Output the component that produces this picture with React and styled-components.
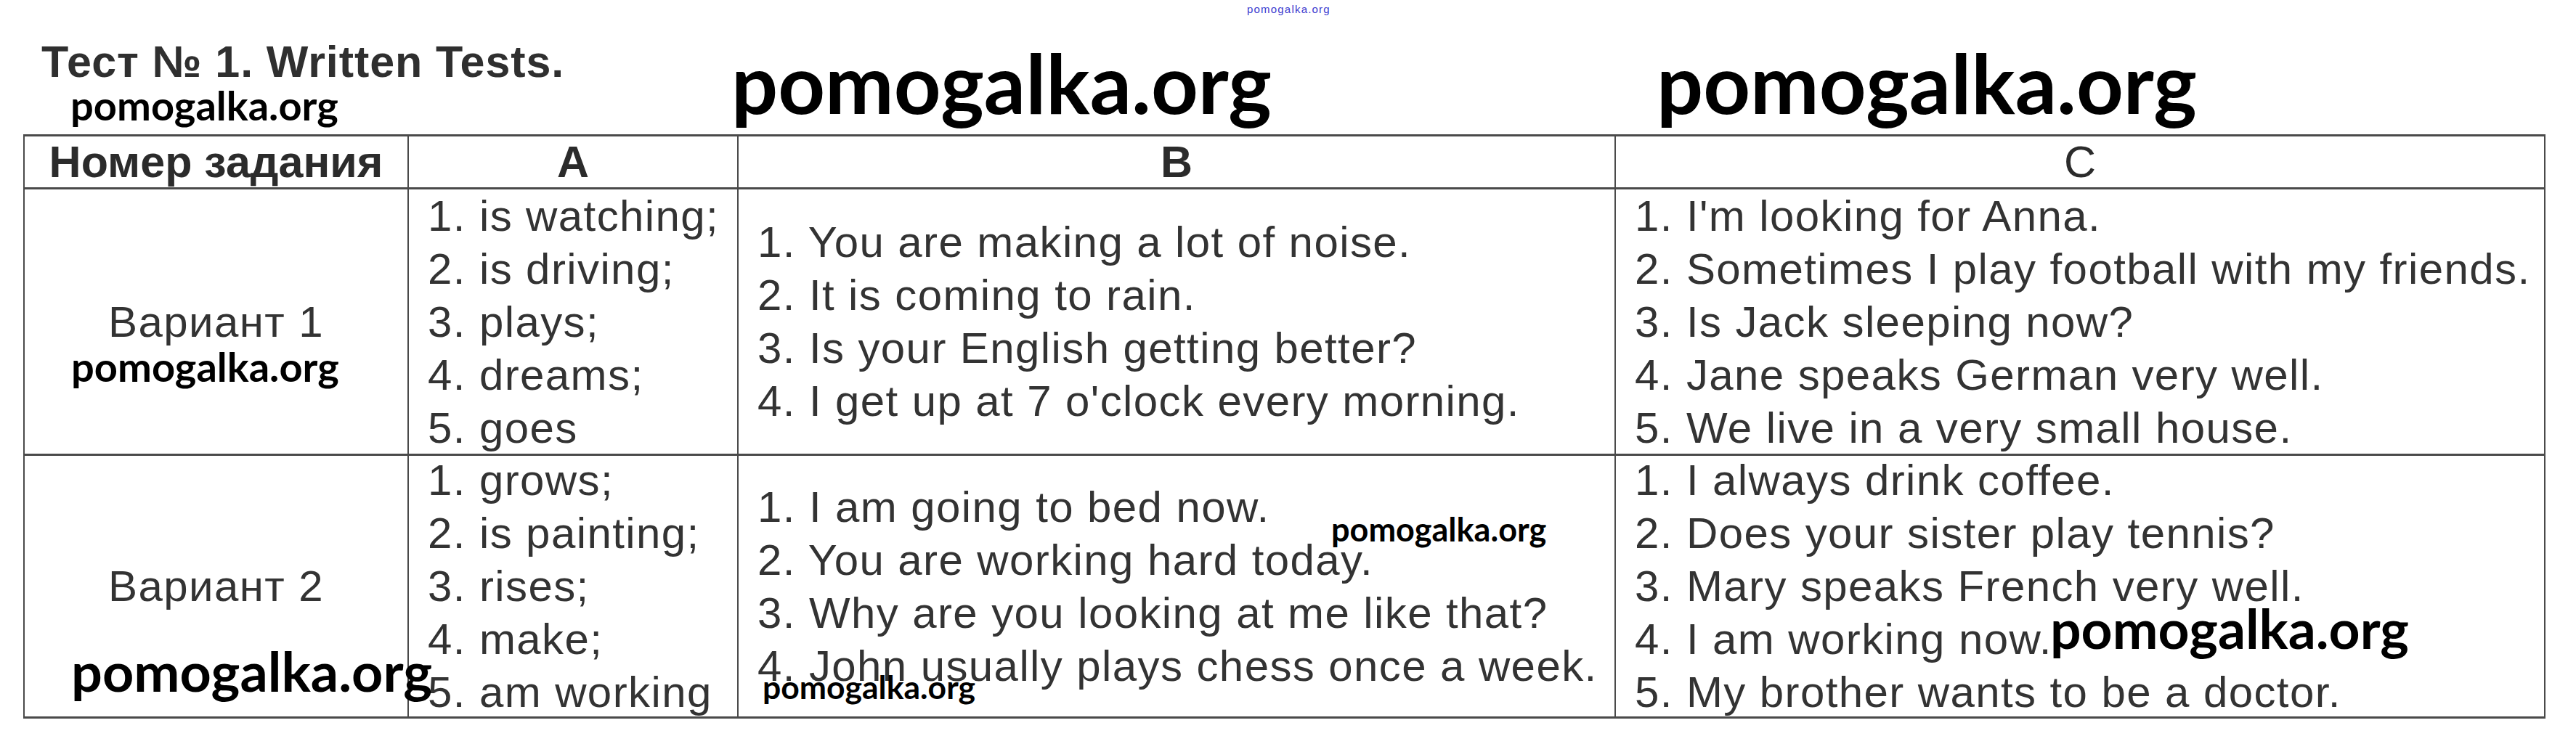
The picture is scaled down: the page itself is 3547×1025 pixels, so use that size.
import React from "react";
import styled, { createGlobalStyle } from "styled-components";

const GlobalStyle = createGlobalStyle`
  html, body {
    margin: 0;
    padding: 0;
    background: #ffffff;
  }
  body {
    font-family: "Liberation Sans", Arial, sans-serif;
    color: #333333;
  }
`;

const Page = styled.div`
  position: relative;
  width: 3547px;
  height: 1025px;
  overflow: hidden;
  background: #ffffff;
`;

const SiteMark = styled.div`
  position: absolute;
  left: 1717px;
  top: 5px;
  font-family: "Liberation Sans", Arial, sans-serif;
  font-size: 15px;
  line-height: 1;
  letter-spacing: 1.2px;
  color: #3b3bcf;
`;

const Title = styled.h1`
  margin: 0;
  padding: 55px 0 0 57px;
  height: 61px;
  font-family: "Liberation Sans", Arial, sans-serif;
  font-size: 61px;
  line-height: 61px;
  font-weight: 700;
  letter-spacing: 0.9px;
  color: #2f2f2f;
`;

const Grid = styled.div`
  display: grid;
  grid-template-columns: 529px 454px 1208px 1280px;
  grid-template-rows: 73px 367px 362px;
  margin: 69px 0 0 32px;
  width: 3473px;
  box-sizing: border-box;
  border-top: 3px solid #4a4a4a;
  border-left: 2px solid #4a4a4a;
`;

const Cell = styled.div`
  box-sizing: border-box;
  border-right: 2px solid #4a4a4a;
  border-bottom: 3px solid #4a4a4a;
  display: flex;
  flex-direction: column;
  justify-content: center;
  align-items: ${(p) => (p.$center ? "center" : "flex-start")};
  padding-left: ${(p) => (p.$center ? "0" : "26px")};
  font-family: "Liberation Sans", Arial, sans-serif;
  color: #333333;
`;

const HeadCell = styled(Cell)`
  align-items: center;
  padding-left: 0;
  font-size: 61px;
  line-height: 1;
  font-weight: ${(p) => (p.$light ? 400 : 700)};
  color: #2b2b2b;
`;

const Line = styled.div`
  font-size: 60px;
  line-height: 73px;
  letter-spacing: 1.4px;
  white-space: nowrap;
`;

const Mark = styled.div`
  position: absolute;
  left: ${(p) => p.$x}px;
  top: ${(p) => p.$y}px;
  font-family: Lato, "Open Sans", sans-serif;
  font-weight: 700;
  font-size: ${(p) => p.$size}px;
  line-height: 1;
  color: #000000;
  white-space: nowrap;
  z-index: 2;
`;

const rows = [
  {
    name: "Вариант 1",
    a: ["1. is watching;", "2. is driving;", "3. plays;", "4. dreams;", "5. goes"],
    b: [
      "1. You are making a lot of noise.",
      "2. It is coming to rain.",
      "3. Is your English getting better?",
      "4. I get up at 7 o'clock every morning.",
    ],
    c: [
      "1. I'm looking for Anna.",
      "2. Sometimes I play football with my friends.",
      "3. Is Jack sleeping now?",
      "4. Jane speaks German very well.",
      "5. We live in a very small house.",
    ],
  },
  {
    name: "Вариант 2",
    a: ["1. grows;", "2. is painting;", "3. rises;", "4. make;", "5. am working"],
    b: [
      "1. I am going to bed now.",
      "2. You are working hard today.",
      "3. Why are you looking at me like that?",
      "4. John usually plays chess once a week.",
    ],
    c: [
      "1. I always drink coffee.",
      "2. Does your sister play tennis?",
      "3. Mary speaks French very well.",
      "4. I am working now.",
      "5. My brother wants to be a doctor.",
    ],
  },
];

// watermark stamps laid over the scan
const marks = [
  { x: 1007, y: 57, size: 113 },
  { x: 2281, y: 57, size: 113 },
  { x: 97, y: 117, size: 56 },
  { x: 98, y: 477, size: 56 },
  { x: 98, y: 886, size: 75.5 },
  { x: 1833, y: 707, size: 45 },
  { x: 1050, y: 924, size: 44.5 },
  { x: 2823, y: 828, size: 75 },
];

const App = () => {
  return (
    <Page>
      <GlobalStyle />
      <SiteMark>pomogalka.org</SiteMark>
      <Title>Тест № 1. Written Tests.</Title>
      <Grid>
        <HeadCell>Номер задания</HeadCell>
        <HeadCell>А</HeadCell>
        <HeadCell>В</HeadCell>
        <HeadCell $light>С</HeadCell>
        {rows.map((row) => (
          <React.Fragment key={row.name}>
            <Cell $center>
              <Line>{row.name}</Line>
            </Cell>
            <Cell>
              {row.a.map((t) => (
                <Line key={t}>{t}</Line>
              ))}
            </Cell>
            <Cell>
              {row.b.map((t) => (
                <Line key={t}>{t}</Line>
              ))}
            </Cell>
            <Cell>
              {row.c.map((t) => (
                <Line key={t}>{t}</Line>
              ))}
            </Cell>
          </React.Fragment>
        ))}
      </Grid>
      {marks.map((m, i) => (
        <Mark key={i} $x={m.x} $y={m.y} $size={m.size}>
          pomogalka.org
        </Mark>
      ))}
    </Page>
  );
};

export default App;
